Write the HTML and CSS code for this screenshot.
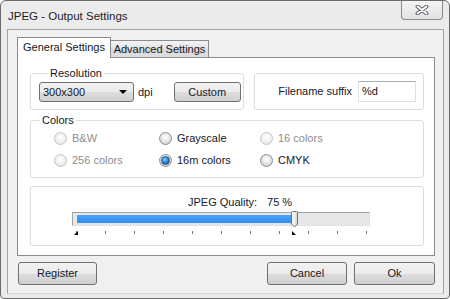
FILE: index.html
```html
<!DOCTYPE html>
<html>
<head>
<meta charset="utf-8">
<link rel="stylesheet" href="styles.css">
</head>
<body>
<div class="window">
  <div class="titlebar">
    <span class="title">JPEG - Output Settings</span>
    <div class="close">
      <svg width="14" height="10" viewBox="0 0 14 10">
        <path d="M2.5 1.5 L11.5 8.5 M11.5 1.5 L2.5 8.5" stroke="#5f6470" stroke-width="4" stroke-linecap="round"/>
        <path d="M2.5 1.5 L11.5 8.5 M11.5 1.5 L2.5 8.5" stroke="#ffffff" stroke-width="2" stroke-linecap="round"/>
      </svg>
    </div>
  </div>
  <div class="client">
    <div class="tabs">
      <div class="tab active">General Settings</div>
      <div class="tab inactive">Advanced Settings</div>
    </div>
    <div class="panel">
      <div class="row-top">
        <div class="group res">
          <div class="legend">Resolution</div>
          <div class="res-row">
            <div class="combo"><span>300x300</span><span class="arrow"></span></div>
            <span class="dpi">dpi</span>
            <div class="btn custom">Custom</div>
          </div>
        </div>
        <div class="group suffix">
          <span>Filename suffix</span>
          <div class="input">%d</div>
        </div>
      </div>
      <div class="group colors">
        <div class="legend">Colors</div>
        <div class="radios">
          <label class="opt disabled"><span class="radio"></span>B&amp;W</label>
          <label class="opt"><span class="radio"></span>Grayscale</label>
          <label class="opt disabled"><span class="radio"></span>16 colors</label>
          <label class="opt disabled"><span class="radio"></span>256 colors</label>
          <label class="opt"><span class="radio checked"></span>16m colors</label>
          <label class="opt"><span class="radio"></span>CMYK</label>
        </div>
      </div>
      <div class="group quality">
        <div class="q-label"><span>JPEG Quality:</span><span class="q-val">75 %</span></div>
        <div class="slider">
          <div class="range">
            <div class="fill" style="width:75%"></div>
            <div class="thumb" style="left:75%">
              <svg width="9" height="17" viewBox="0 0 9 17">
                <defs>
                  <linearGradient id="tg" x1="0" x2="1" y1="0" y2="0">
                    <stop offset="0" stop-color="#ffffff"/>
                    <stop offset="1" stop-color="#d6d6d6"/>
                  </linearGradient>
                </defs>
                <path d="M1.5 1.5 Q1.5 0.5 2.5 0.5 L6.5 0.5 Q7.5 0.5 7.5 1.5 L7.5 13 L4.5 16 L1.5 13 Z" fill="url(#tg)" stroke="#707070"/>
              </svg>
            </div>
          </div>
        </div>
        <div class="ticks">
          <i></i><i></i><i></i><i></i><i></i><i></i><i></i><i></i><i></i><i></i><i></i>
          <svg class="mark start" width="4" height="4" viewBox="0 0 4 4"><polygon points="4,0 4,4 0,4" fill="#000"/></svg>
          <svg class="mark end" width="4" height="4" viewBox="0 0 4 4"><polygon points="0,0 4,4 0,4" fill="#000"/></svg>
        </div>
      </div>
    </div>
    <div class="actions">
      <div class="btn register">Register</div>
      <div class="spacer"></div>
      <div class="btn cancel">Cancel</div>
      <div class="btn ok">Ok</div>
    </div>
  </div>
</div>
</body>
</html>
```
FILE: styles.css
```css
* { box-sizing: border-box; }
html, body { margin: 0; background: #ffffff; }
body {
  font: 11px/13px "Liberation Sans", Arial, sans-serif;
  color: #14182a;
}
.window {
  width: 450px;
  height: 299px;
  border: 1px solid #6b6b6b;
  border-radius: 6px 6px 4px 4px;
  background: #ebebeb;
  display: flex;
  flex-direction: column;
  overflow: hidden;
}
.titlebar {
  height: 28px;
  display: flex;
  align-items: flex-start;
  padding-left: 7px;
  flex: none;
}
.title {
  margin-top: 9px;
  font-size: 11.5px;
  color: #1e1e1e;
}
.close {
  margin-left: auto;
  margin-right: 6px;
  margin-top: -1px;
  width: 42px;
  height: 20px;
  border: 1px solid #8a8a8a;
  border-top: none;
  border-radius: 0 0 4px 4px;
  background: linear-gradient(#f6f6f6, #e2e2e2);
  display: flex;
  align-items: center;
  justify-content: center;
}
.client {
  flex: 1;
  margin: 0 5px 4px 6px;
  border: 1px solid #a3a3a3;
  border-bottom-color: #d6d6d6;
  background: #f0f0f0;
  padding: 7px 8px 0 9px;
  display: flex;
  flex-direction: column;
}
.tabs {
  display: flex;
  align-items: flex-end;
  height: 20px;
}
.tab {
  border: 1px solid #898c95;
  border-bottom: none;
  text-align: center;
  white-space: nowrap;
}
.tab.active {
  width: 94px;
  height: 21px;
  margin-bottom: -1px;
  background: #ffffff;
  position: relative;
  z-index: 1;
  padding-top: 3px;
}
.tab.inactive {
  width: 98px;
  height: 17px;
  border-left: none;
  background: linear-gradient(#f3f3f3, #e3e3e3 50%, #d8d8d8 51%, #dfdfdf);
  padding-top: 2px;
}
.panel {
  height: 199px;
  border: 1px solid #898c95;
  background: #ffffff;
  padding: 15px 10px 0 12px;
  display: flex;
  flex-direction: column;
}
.group {
  border: 1px solid #d5dfe5;
  border-radius: 3px;
}
.legend {
  width: fit-content;
  margin: -7px 0 0 9px;
  padding: 0 2px;
  background: #ffffff;
}
.row-top {
  display: flex;
  gap: 10px;
  height: 37px;
}
.group.res {
  width: 214px;
  padding: 0 0 0 8px;
}
.res-row {
  display: flex;
  align-items: center;
  margin-top: 2px;
}
.combo {
  width: 95px;
  height: 20px;
  border: 1px solid #707070;
  border-radius: 3px;
  background: linear-gradient(#f2f2f2, #ebebeb 50%, #dddddd 51%, #cfcfcf);
  display: flex;
  align-items: center;
  padding: 0 5px 0 3px;
  justify-content: space-between;
}
.arrow {
  width: 0;
  height: 0;
  border-left: 4px solid transparent;
  border-right: 4px solid transparent;
  border-top: 4px solid #000000;
  margin-right: 1px;
}
.dpi {
  margin-left: 4px;
}
.btn {
  height: 20px;
  border: 1px solid #707070;
  border-radius: 3px;
  background: linear-gradient(#f2f2f2, #ebebeb 50%, #dddddd 51%, #cfcfcf);
  display: flex;
  align-items: center;
  justify-content: center;
}
.btn.custom {
  width: 67px;
  margin-left: 21px;
}
.group.suffix {
  width: 170px;
  display: flex;
  align-items: center;
  justify-content: flex-end;
  gap: 6px;
  padding-right: 7px;
}
.input {
  width: 58px;
  height: 21px;
  border: 1px solid #dbdfe6;
  border-top-color: #abadb3;
  border-left-color: #e2e3ea;
  background: #ffffff;
  padding: 3px 0 0 3px;
}
.group.colors {
  margin-top: 10px;
  height: 58px;
}
.radios {
  display: grid;
  grid-template-columns: 105px 101px 1fr;
  grid-auto-rows: 22px;
  padding-left: 23px;
}
.opt {
  display: flex;
  align-items: center;
  gap: 5px;
  white-space: nowrap;
}
.opt.disabled {
  color: #8d8d8d;
}
.radio {
  width: 13px;
  height: 13px;
  border-radius: 50%;
  border: 1px solid #8e8f8f;
  background: radial-gradient(circle at 50% 40%, #ffffff 0, #f0f0f0 30%, #cfcfcf 80%);
  display: flex;
  align-items: center;
  justify-content: center;
  flex: none;
}
.opt.disabled .radio {
  border-color: #c4c4c4;
  background: radial-gradient(circle at 50% 40%, #ffffff 0, #f4f4f4 40%, #e2e2e2 90%);
}
.radio.checked::after {
  content: "";
  width: 7px;
  height: 7px;
  border-radius: 50%;
  background: radial-gradient(circle at 40% 35%, #8fd1ff 0, #2a7ac9 55%, #0e3d7a 100%);
  border: 1px solid #1d5a9c;
}
.group.quality {
  margin-top: 8px;
  height: 60px;
}
.q-label {
  margin: 9px 0 0 157px;
  display: flex;
  gap: 10px;
}
.slider {
  margin: 3px 0 0 41px;
  width: 298px;
  height: 14px;
  border: 1px solid;
  border-color: #a0a0a0 #e2e2e2 #e2e2e2 #a0a0a0;
  background: #e7e7e7;
  padding: 2px 3px 2px 4px;
}
.range {
  position: relative;
  height: 8px;
}
.fill {
  height: 8px;
  background: linear-gradient(#4aa3f7, #2f8ef0);
}
.thumb {
  position: absolute;
  top: -4px;
  width: 9px;
  height: 17px;
  margin-left: -4px;
  line-height: 0;
}
.ticks {
  position: relative;
  margin: 5px 0 0 45px;
  width: 291px;
  height: 3px;
  display: flex;
  justify-content: space-between;
}
.ticks i {
  width: 1px;
  height: 3px;
  background: #777777;
}
.mark {
  position: absolute;
  top: 0;
}
.mark.start { left: -2px; }
.mark.end { left: 216px; }
.actions {
  display: flex;
  margin-top: 6px;
  padding-left: 1px;
  gap: 7px;
}
.spacer { flex: 1; }
.actions .btn {
  height: 23px;
}
.btn.register { width: 79px; }
.btn.cancel { width: 80px; }
.btn.ok { width: 81px; }
```
